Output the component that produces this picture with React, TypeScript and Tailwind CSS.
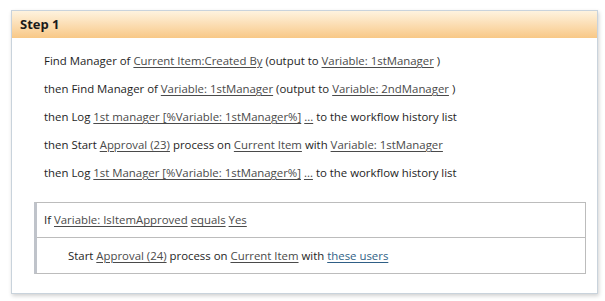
const font = { fontFamily: '"Open Sans", "Segoe UI", sans-serif' };

function L({ children, blue }: { children: React.ReactNode; blue?: boolean }) {
  return (
    <span className={`underline underline-offset-2 decoration-1 ${blue ? "text-[#2f5f86]" : "text-[#4a4a4a]"}`}>
      {children}
    </span>
  );
}

const rows: React.ReactNode[] = [
  <>Find Manager of <L>Current Item:Created By</L> (output to <L>Variable: 1stManager</L> )</>,
  <>then Find Manager of <L>Variable: 1stManager</L> (output to <L>Variable: 2ndManager</L> )</>,
  <>then Log <L>1st manager [%Variable: 1stManager%]</L> <L>...</L> to the workflow history list</>,
  <>then Start <L>Approval (23)</L> process on <L>Current Item</L> with <L>Variable: 1stManager</L></>,
  <>then Log <L>1st Manager [%Variable: 1stManager%]</L> <L>...</L> to the workflow history list</>,
];

export default function App() {
  return (
    <div className="w-[605px] h-[301px] bg-white pt-[10px] pl-[11px]" style={font}>
      <div className="w-[587px] h-[284px] border border-[#c9d3dc] bg-white shadow-[1px_2px_4px_rgba(0,0,0,0.18)]">
        <div className="h-[27px] flex items-center pl-[8px] bg-gradient-to-b from-[#fef3df] to-[#f8c886] text-[13px] font-bold text-[#1a1a1a]">
          Step 1
        </div>
        <div className="pl-[32px] pt-[14px] text-[11.4px] text-[#1e1e1e]">
          {rows.map((r, i) => (
            <div key={i} className="h-[28px] leading-[18px]">{r}</div>
          ))}
        </div>
        <div className="ml-[22px] mt-[10px] w-[552px] border border-[#bcbcbc] border-l-[3px] border-l-[#bfc3ca] text-[11.4px] text-[#1e1e1e]">
          <div className="h-[35px] flex items-center pl-[7px] border-b border-[#bcbcbc]">
            <span>If <L>Variable: IsItemApproved</L> <L>equals</L> <L>Yes</L></span>
          </div>
          <div className="h-[35px] flex items-center pl-[31px]">
            <span>Start <L>Approval (24)</L> process on <L>Current Item</L> with <L blue>these users</L></span>
          </div>
        </div>
      </div>
    </div>
  );
}
